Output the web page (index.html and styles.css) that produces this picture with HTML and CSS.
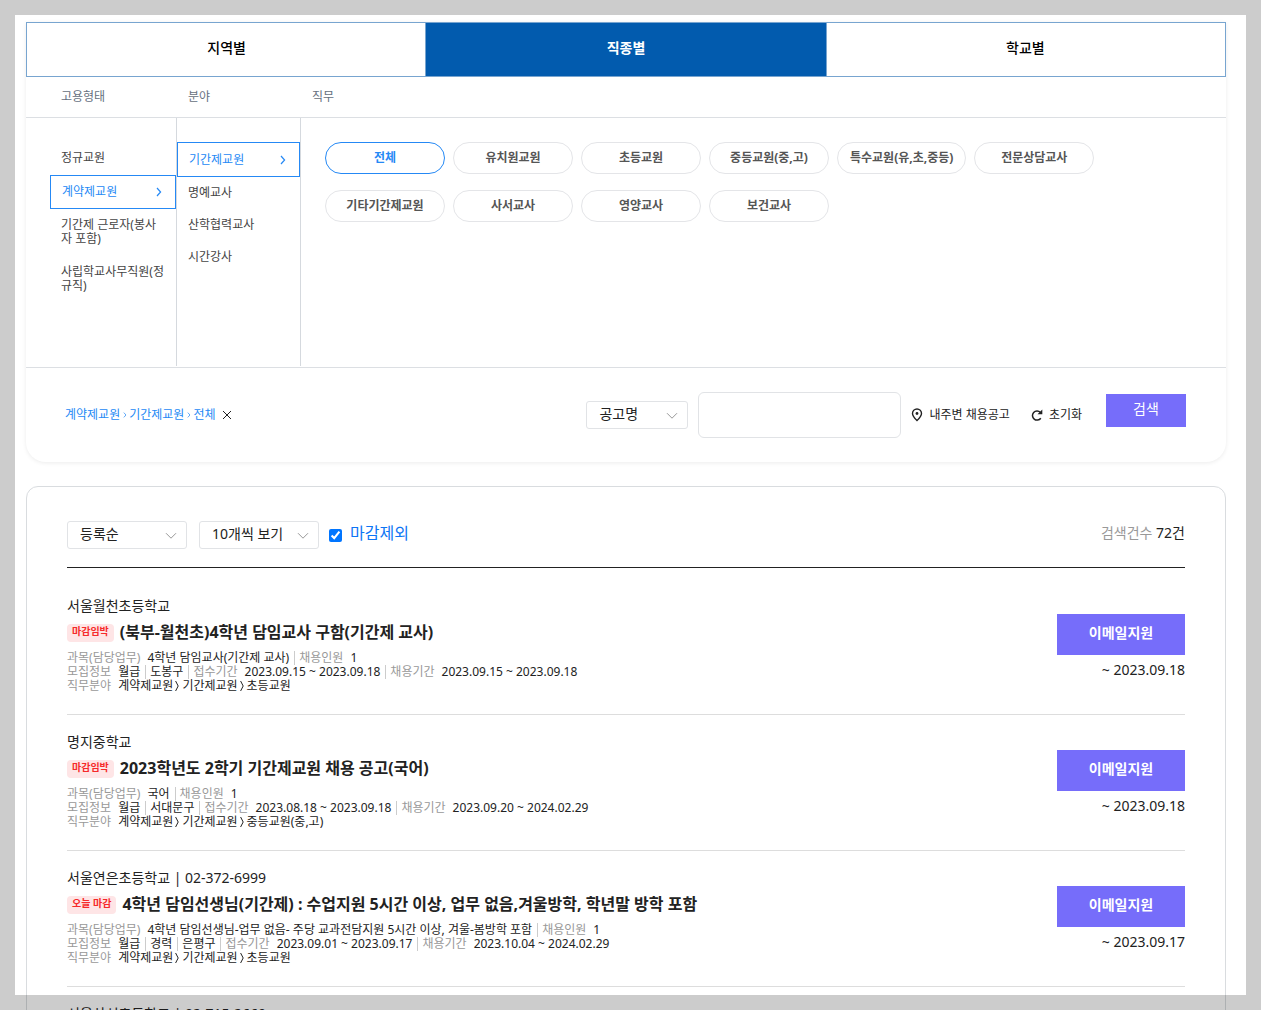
FILE: index.html
```html
<!DOCTYPE html>
<html lang="ko">
<head>
	<meta charset="UTF-8">
	<meta name="viewport" content="width=device-width, initial-scale=1">
	<title>채용공고</title>
	<link rel="stylesheet" href="styles.css">
</head>
<body>
	<!-- 아이콘 -->
	<svg class="sprite" aria-hidden="true">
		<symbol id="i-right" viewBox="0 0 6 10"><path d="M1 1l3.6 4L1 9" fill="none" stroke="currentColor" stroke-width="1.2"/></symbol>
		<symbol id="i-gt" viewBox="0 0 4 12"><path d="M.6 1l2.600 5L.6 11" fill="none" stroke="currentColor"/></symbol>
		<symbol id="i-down" viewBox="0 0 12 8"><path d="M1 1.2l5 5 5-5" fill="none" stroke="currentColor"/></symbol>
		<symbol id="i-close" viewBox="0 0 10 10"><path d="M1 1l8 8M9 1L1 9" fill="none" stroke="currentColor"/></symbol>
		<symbol id="i-pin" viewBox="0 0 12 14"><path d="M6 12.6C3.4 9.9 1.5 8 1.5 5.5a4.5 4.5 0 0 1 9 0C10.5 8 8.6 9.9 6 12.6z" fill="none" stroke="currentColor" stroke-width="1.4"/><circle cx="6" cy="5.5" r="1.4" fill="currentColor"/></symbol>
		<symbol id="i-reset" viewBox="0 0 12 12"><path d="M9.300 3.200A4.600 4.600 0 1 0 9.800 9.200" fill="none" stroke="currentColor" stroke-width="1.500"/><path d="M11.300 .4v4.800H6.500z" fill="currentColor"/></symbol>
	</svg>

	<div class="wrap">
		<!-- 검색 조건 -->
		<form class="search">
			<div class="tabs">
				<button type="button">지역별</button>
				<button type="button" class="on">직종별</button>
				<button type="button">학교별</button>
			</div>
			<div class="cond cond-head">
				<span>고용형태</span>
				<span>분야</span>
				<span>직무</span>
			</div>
			<div class="cond cond-body">
				<ul class="depth depth1">
					<li><a href="#">정규교원</a></li>
					<li><a href="#" class="on">계약제교원<svg class="arrow"><use href="#i-right"/></svg></a></li>
					<li><a href="#">기간제 근로자(봉사자 포함)</a></li>
					<li><a href="#">사립학교사무직원(정규직)</a></li>
				</ul>
				<ul class="depth depth2">
					<li><a href="#" class="on">기간제교원<svg class="arrow"><use href="#i-right"/></svg></a></li>
					<li><a href="#">명예교사</a></li>
					<li><a href="#">산학협력교사</a></li>
					<li><a href="#">시간강사</a></li>
				</ul>
				<div class="jobs">
					<button type="button" class="on">전체</button>
					<button type="button">유치원교원</button>
					<button type="button">초등교원</button>
					<button type="button">중등교원(중,고)</button>
					<button type="button">특수교원(유,초,중등)</button>
					<button type="button">전문상담교사</button>
					<button type="button">기타기간제교원</button>
					<button type="button">사서교사</button>
					<button type="button">영양교사</button>
					<button type="button">보건교사</button>
				</div>
			</div>
			<div class="search-bar">
				<div class="path">
					<span>계약제교원</span><svg class="sep"><use href="#i-right"/></svg><span>기간제교원</span><svg class="sep"><use href="#i-right"/></svg><span>전체</span>
					<button type="button" aria-label="삭제"><svg><use href="#i-close"/></svg></button>
				</div>
				<div class="select select-type">
					<select aria-label="검색 구분"><option>공고명</option></select>
					<svg><use href="#i-down"/></svg>
				</div>
				<input type="text" class="keyword" aria-label="검색어">
				<button type="button" class="tool tool-near"><svg class="pin"><use href="#i-pin"/></svg>내주변 채용공고</button>
				<button type="button" class="tool"><svg class="reset"><use href="#i-reset"/></svg>초기화</button>
				<button type="button" class="btn-search">검색</button>
			</div>
		</form>

		<!-- 검색 결과 -->
		<section class="result">
			<div class="result-head">
				<div class="select">
					<select aria-label="정렬"><option>등록순</option></select>
					<svg><use href="#i-down"/></svg>
				</div>
				<div class="select">
					<select aria-label="보기 개수"><option>10개씩 보기</option></select>
					<svg><use href="#i-down"/></svg>
				</div>
				<input type="checkbox" id="except" checked>
				<label for="except">마감제외</label>
				<p class="total"><span>검색건수</span> 72건</p>
			</div>
			<ul class="list">
				<li>
					<div class="info">
						<p class="school">서울월천초등학교</p>
						<h3><em>마감임박</em><a href="#">(북부-월천초)4학년 담임교사 구함(기간제 교사)</a></h3>
						<dl>
							<div><dt>과목(담당업무)</dt><dd>4학년 담임교사(기간제 교사)</dd><dt class="bar">채용인원</dt><dd>1</dd></div>
							<div><dt>모집정보</dt><dd>월급</dd><dd class="bar">도봉구</dd><dt class="bar">접수기간</dt><dd>2023.09.15 ~ 2023.09.18</dd><dt class="bar">채용기간</dt><dd>2023.09.15 ~ 2023.09.18</dd></div>
							<div><dt>직무분야</dt><dd class="job"><span>계약제교원</span><svg><use href="#i-gt"/></svg><span>기간제교원</span><svg><use href="#i-gt"/></svg><span>초등교원</span></dd></div>
						</dl>
					</div>
					<div class="apply">
						<button type="button">이메일지원</button>
						<p>~ 2023.09.18</p>
					</div>
				</li>
				<li>
					<div class="info">
						<p class="school">명지중학교</p>
						<h3><em>마감임박</em><a href="#">2023학년도 2학기 기간제교원 채용 공고(국어)</a></h3>
						<dl>
							<div><dt>과목(담당업무)</dt><dd>국어</dd><dt class="bar">채용인원</dt><dd>1</dd></div>
							<div><dt>모집정보</dt><dd>월급</dd><dd class="bar">서대문구</dd><dt class="bar">접수기간</dt><dd>2023.08.18 ~ 2023.09.18</dd><dt class="bar">채용기간</dt><dd>2023.09.20 ~ 2024.02.29</dd></div>
							<div><dt>직무분야</dt><dd class="job"><span>계약제교원</span><svg><use href="#i-gt"/></svg><span>기간제교원</span><svg><use href="#i-gt"/></svg><span>중등교원(중,고)</span></dd></div>
						</dl>
					</div>
					<div class="apply">
						<button type="button">이메일지원</button>
						<p>~ 2023.09.18</p>
					</div>
				</li>
				<li>
					<div class="info">
						<p class="school">서울연은초등학교 | 02-372-6999</p>
						<h3><em>오늘 마감</em><a href="#">4학년 담임선생님(기간제) : 수업지원 5시간 이상, 업무 없음,겨울방학, 학년말 방학 포함</a></h3>
						<dl>
							<div><dt>과목(담당업무)</dt><dd>4학년 담임선생님-업무 없음- 주당 교과전담지원 5시간 이상, 겨울-봄방학 포함</dd><dt class="bar">채용인원</dt><dd>1</dd></div>
							<div><dt>모집정보</dt><dd>월급</dd><dd class="bar">경력</dd><dd class="bar">은평구</dd><dt class="bar">접수기간</dt><dd>2023.09.01 ~ 2023.09.17</dd><dt class="bar">채용기간</dt><dd>2023.10.04 ~ 2024.02.29</dd></div>
							<div><dt>직무분야</dt><dd class="job"><span>계약제교원</span><svg><use href="#i-gt"/></svg><span>기간제교원</span><svg><use href="#i-gt"/></svg><span>초등교원</span></dd></div>
						</dl>
					</div>
					<div class="apply">
						<button type="button">이메일지원</button>
						<p>~ 2023.09.17</p>
					</div>
				</li>
				<li>
					<div class="info">
						<p class="school">서울삼선초등학교 | 02-715-2669</p>
					</div>
				</li>
			</ul>
		</section>
	</div>
	<div class="frame"></div>
</body>
</html>
```
FILE: styles.css
```css
*{
	box-sizing: border-box;
}
body,
p,
h3,
ul,
dl,
dd{
	margin: 0;
	padding: 0;
}
body{
	height: 100vh;
	overflow: hidden;
	background-color: #fff;
	color: #222;
	font-family: "Noto Sans", "Noto Sans CJK KR", sans-serif;
	font-size: 12px;
	line-height: 14px;
}
ul{
	list-style: none;
}
a{
	color: inherit;
	text-decoration: none;
}
button,
input,
select{
	margin: 0;
	padding: 0;
	font: inherit;
	color: inherit;
	border: 0;
	background: none;
}
button{
	cursor: pointer;
}
.sprite{
	display: none;
}
.wrap{
	padding: 22px 35px 0 26px;
}
/* 화면 테두리 */
.frame{
	position: fixed;
	top: 0;
	left: 0;
	right: 0;
	bottom: 0;
	border: 15px solid rgba(0, 0, 0, 0.2);
	pointer-events: none;
}

/* 검색 조건 */
.search{
	border-radius: 0 0 20px 20px;
	box-shadow: 0 1px 4px rgba(0, 0, 0, 0.08);
}
.tabs{
	display: grid;
	grid-template-columns: 1fr 1fr 1fr;
	height: 55px;
	border: 1px solid #78a5d0;
}
.tabs button{
	padding-bottom: 4px;
	font-size: 14px;
	font-weight: 500;
	color: #000;
}
.tabs .on{
	margin: 0 -1px;
	border: solid #78a5d0;
	border-width: 0 1px;
	font-weight: 700;
	color: #fff;
	background-color: #025bae;
}
.cond{
	display: grid;
	grid-template-columns: 127px 124px 1fr;
	padding-left: 24px;
	border-bottom: 1px solid #dcdfe3;
}
.cond-head{
	height: 41px;
	padding-top: 13px;
	color: #667080;
}
.cond-head span{
	padding-left: 11px;
}
.cond-body{
	min-height: 250px;
	padding-bottom: 1px;
	color: #444;
}
.depth{
	padding-top: 24px;
	border-right: 1px solid #d5d9de;
}
.depth a{
	display: block;
	padding: 9px 10px 9px 11px;
	word-break: break-all;
}
.depth1 a{
	padding-bottom: 10px;
}
.depth .on{
	display: flex;
	justify-content: space-between;
	align-items: center;
	height: 34px;
	padding: 0 13px 0 11px;
	border: 1px solid #2589f5;
	color: #2589f5;
}
.depth2 .on{
	height: 35px;
}
.arrow{
	width: 6px;
	height: 10px;
}
.jobs{
	display: flex;
	flex-wrap: wrap;
	align-content: flex-start;
	gap: 16px 8px;
	padding: 24px;
}
.jobs button{
	min-width: 120px;
	height: 32px;
	padding: 0 12px;
	border: 1px solid #e4e5e8;
	border-radius: 16px;
	font-weight: 700;
	color: #555;
}
.jobs .on{
	border-color: #2589f5;
	color: #2589f5;
}
.search-bar{
	display: flex;
	align-items: center;
	height: 94px;
	padding: 0 40px 0 39px;
}
.path{
	display: flex;
	align-items: center;
	margin-right: auto;
	color: #2589f5;
}
.sep{
	width: 4px;
	height: 6px;
	margin: 0 2px 0 3px;
}
.path button{
	display: flex;
	margin-left: 6px;
	color: #222;
}
.path button svg{
	width: 10px;
	height: 10px;
}
.select{
	position: relative;
	width: 120px;
}
.select-type{
	width: 102px;
}
.select select{
	width: 100%;
	height: 28px;
	padding: 0 30px 2px 12px;
	border: 1px solid #e1e3e6;
	border-radius: 3px;
	appearance: none;
	font-size: 14px;
}
.select svg{
	position: absolute;
	top: 11px;
	right: 10px;
	width: 12px;
	height: 8px;
	color: #999;
	pointer-events: none;
}
.keyword{
	width: 203px;
	height: 46px;
	margin: 0 10px;
	padding: 0 12px;
	border: 1px solid #e1e3e6;
	border-radius: 6px;
}
.tool{
	display: flex;
	align-items: center;
	gap: 6px;
}
.tool-near{
	margin-right: 21px;
}
.pin{
	width: 12px;
	height: 14px;
}
.reset{
	width: 12px;
	height: 12px;
}
.btn-search{
	width: 80px;
	height: 33px;
	margin: 0 0 10px 24px;
	padding-bottom: 2px;
	font-size: 14px;
	color: #fff;
	background-color: #766dfa;
}

/* 검색 결과 */
.result{
	margin-top: 24px;
	padding: 34px 40px 40px;
	border: 1px solid #d9dcdf;
	border-radius: 12px;
}
.result-head{
	display: flex;
	align-items: center;
	height: 47px;
	padding-bottom: 18px;
	border-bottom: 1px solid #222;
}
.result-head .select{
	margin-right: 12px;
}
.result-head input{
	width: 13px;
	height: 13px;
	margin-right: 8px;
}
.result-head .select:nth-of-type(2){
	margin-right: 10px;
}
.result-head label{
	padding-bottom: 4px;
	font-size: 16px;
	line-height: 20px;
	color: #0d75f5;
}
.total{
	margin-left: auto;
	padding-bottom: 4px;
	font-size: 14px;
}
.total span{
	color: #999;
}
.list li{
	display: flex;
	justify-content: space-between;
	height: 136px;
	padding-top: 18px;
	border-bottom: 1px solid #ddd;
}
.list li:first-child{
	height: 147px;
	padding-top: 29px;
}
.school{
	font-size: 14px;
	line-height: 18px;
}
.list h3{
	display: flex;
	align-items: center;
	gap: 6px;
	height: 24px;
	margin: 5px 0 7px;
	font-size: 16px;
	line-height: 24px;
}
.list em{
	height: 18px;
	margin-top: 2px;
	padding: 0 5px;
	border-radius: 4px;
	font-size: 10px;
	line-height: 15px;
	font-style: normal;
	color: #f62a2a;
	background-color: #fee5e6;
}
.list dl div{
	display: flex;
}
.list dt{
	margin-right: 7px;
	color: #999;
}
.list .bar{
	margin-left: 5px;
	padding-left: 4px;
	border-left: 1px solid #ccc;
}
.job{
	display: flex;
	align-items: center;
	gap: 2px;
}
.job svg{
	width: 4px;
	height: 12px;
	margin-right: 1px;
}
.apply{
	padding-top: 17px;
	text-align: right;
}
.apply button{
	display: block;
	width: 128px;
	height: 41px;
	padding-bottom: 3px;
	font-size: 14px;
	font-weight: 700;
	color: #fff;
	background-color: #766dfa;
}
.apply p{
	padding-top: 6px;
	font-size: 14px;
	line-height: 18px;
}
```
